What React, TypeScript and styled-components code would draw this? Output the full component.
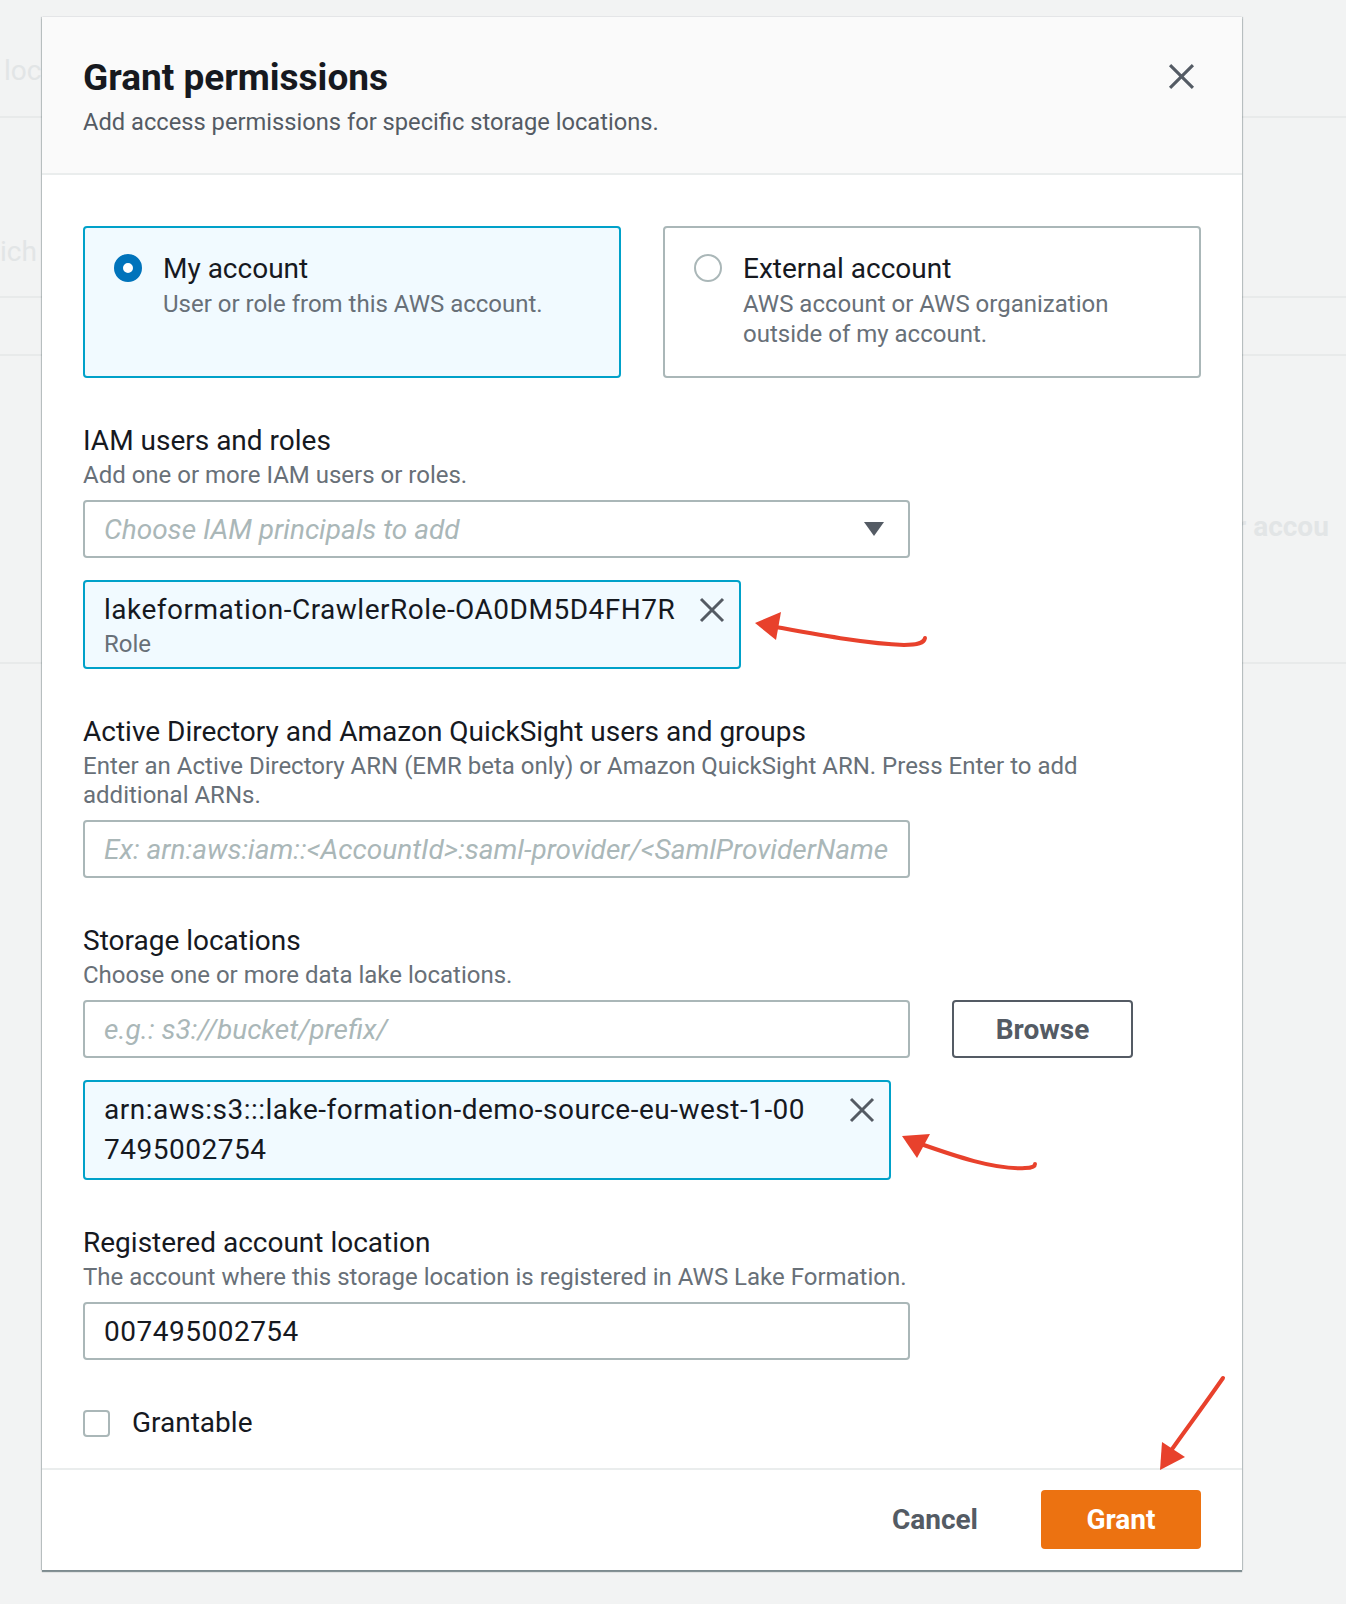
import React from "react";
import styled, { createGlobalStyle } from "styled-components";

const Global = createGlobalStyle`
  html, body { margin: 0; padding: 0; background: #f2f3f3; }
  body {
    font-family: Roboto, "Liberation Sans", Arial, sans-serif;
    -webkit-font-smoothing: antialiased;
  }
  * { box-sizing: border-box; }
`;

const Page = styled.div`
  position: relative;
  width: 1346px;
  height: 1604px;
  overflow: hidden;
  background: #f2f3f3;
`;

/* ---------- obscured page behind the dialog ---------- */
const Backdrop = styled.div`
  display: flex;
  flex-direction: column;
`;

const BgRow = styled.div<{ $h: number; $line?: boolean }>`
  height: ${(p) => p.$h}px;
  border-bottom: ${(p) => (p.$line ? "2px solid #e8eaea" : "none")};
`;

const BgText = styled.div<{ $top: number; $left: number; $bold?: boolean }>`
  width: max-content;
  margin-top: ${(p) => p.$top}px;
  margin-left: ${(p) => p.$left}px;
  font-size: 28px;
  line-height: 40px;
  font-weight: ${(p) => (p.$bold ? 700 : 400)};
  color: #e2e5e6;
  white-space: nowrap;
`;

/* ---------- dialog ---------- */
const Overlay = styled.div`
  position: absolute;
  inset: 0;
  padding: 17px 0 0 42px;
`;

const Modal = styled.div`
  width: 1200px;
  background: #ffffff;
  box-shadow: 0 2px 1px rgba(0, 28, 36, 0.45), 1px 0 1px rgba(0, 28, 36, 0.18),
    -1px 0 1px rgba(0, 28, 36, 0.18);
`;

const Header = styled.div`
  display: flex;
  justify-content: space-between;
  align-items: flex-start;
  background: #fafafa;
  border-bottom: 2px solid #eaeded;
  padding: 39px 41px 36px;
`;

const Title = styled.h2`
  margin: 0;
  font-size: 37px;
  line-height: 44px;
  font-weight: 700;
  color: #16191f;
`;

const Subtitle = styled.p`
  margin: 8px 0 0;
  font-size: 23.7px;
  line-height: 29px;
  color: #545b64;
`;

const IconButton = styled.button`
  width: 40px;
  height: 40px;
  border: 0;
  padding: 0;
  background: transparent;
  display: flex;
  align-items: center;
  justify-content: center;
  color: #545b64;
  cursor: pointer;
`;

const Body = styled.div`
  display: flex;
  flex-direction: column;
  gap: 43px;
  padding: 51px 41px 25px;
`;

const Tiles = styled.div`
  display: grid;
  grid-template-columns: 1fr 1fr;
  gap: 42px;
`;

const Tile = styled.div<{ $selected?: boolean }>`
  height: 152px;
  display: flex;
  align-items: flex-start;
  gap: 21px;
  padding: 21px 20px 0 29px;
  border: 2px solid ${(p) => (p.$selected ? "#00a1c9" : "#aab7b8")};
  border-radius: 4px;
  background: ${(p) => (p.$selected ? "#f1faff" : "#ffffff")};
`;

const Radio = styled.span<{ $checked?: boolean }>`
  flex: none;
  width: 28px;
  height: 28px;
  margin-top: 5px;
  border-radius: 50%;
  background: #ffffff;
  border: ${(p) => (p.$checked ? "9px solid #0073bb" : "2px solid #aab7b8")};
`;

const TileText = styled.div`
  display: flex;
  flex-direction: column;
`;

const TileTitle = styled.div`
  font-size: 28px;
  line-height: 40px;
  color: #16191f;
`;

const TileDesc = styled.div`
  font-size: 24px;
  line-height: 30px;
  color: #687078;
`;

const Field = styled.div`
  display: flex;
  flex-direction: column;
  align-items: flex-start;
`;

const Label = styled.div`
  font-size: 28px;
  line-height: 40px;
  color: #16191f;
`;

const Description = styled.div`
  font-size: 24px;
  line-height: 29px;
  color: #687078;
`;

const ControlRow = styled.div`
  display: flex;
  gap: 42px;
  margin-top: 10px;
`;

const TextInput = styled.input`
  width: 827px;
  height: 58px;
  margin: 0;
  padding: 0 19px;
  border: 2px solid #aab7b8;
  border-radius: 4px;
  background: #ffffff;
  font-family: inherit;
  font-size: 28px;
  letter-spacing: 0.5px;
  color: #16191f;
  outline: none;
  &::placeholder {
    color: #aab7b8;
    font-style: italic;
    letter-spacing: 0;
  }
`;

const Select = styled.div`
  width: 827px;
  height: 58px;
  display: flex;
  align-items: center;
  justify-content: space-between;
  padding: 0 24px 0 19px;
  border: 2px solid #aab7b8;
  border-radius: 4px;
  background: #ffffff;
`;

const Placeholder = styled.span`
  font-size: 28px;
  font-style: italic;
  color: #aab7b8;
`;

const Token = styled.div<{ $width: number }>`
  width: ${(p) => p.$width}px;
  margin-top: 22px;
  display: flex;
  justify-content: space-between;
  align-items: flex-start;
  padding: 8px 14px 8px 19px;
  border: 2px solid #00a1c9;
  border-radius: 4px;
  background: #f1faff;
`;

const TokenBody = styled.div`
  display: flex;
  flex-direction: column;
`;

const TokenText = styled.div`
  font-size: 28px;
  line-height: 40px;
  letter-spacing: 0.5px;
  color: #16191f;
`;

const TokenSub = styled.div`
  font-size: 24px;
  line-height: 29px;
  color: #687078;
`;

const Dismiss = styled(IconButton)`
  width: 26px;
  height: 26px;
  margin-top: 7px;
`;

const SecondaryButton = styled.button`
  width: 181px;
  height: 58px;
  border: 2px solid #545b64;
  border-radius: 4px;
  background: #ffffff;
  font-family: inherit;
  font-size: 28px;
  font-weight: 700;
  color: #545b64;
  cursor: pointer;
`;

const CheckRow = styled.label`
  display: flex;
  align-items: center;
  gap: 22px;
  font-size: 28px;
  line-height: 40px;
  color: #16191f;
`;

const Checkbox = styled.span`
  width: 27px;
  height: 27px;
  border: 2px solid #aab7b8;
  border-radius: 4px;
  background: #ffffff;
`;

const Footer = styled.div`
  display: flex;
  justify-content: flex-end;
  align-items: center;
  gap: 43px;
  border-top: 2px solid #eaeded;
  padding: 20px 41px 21px;
`;

const LinkButton = styled.button`
  height: 59px;
  padding: 0 20px;
  border: 0;
  background: transparent;
  font-family: inherit;
  font-size: 28px;
  font-weight: 700;
  color: #545b64;
  cursor: pointer;
`;

const PrimaryButton = styled.button`
  width: 160px;
  height: 59px;
  border: 0;
  border-radius: 4px;
  background: #ec7211;
  font-family: inherit;
  font-size: 28px;
  font-weight: 700;
  color: #ffffff;
  cursor: pointer;
`;

const Annotations = styled.svg`
  position: absolute;
  left: 0;
  top: 0;
  pointer-events: none;
`;

const CloseIcon = ({ size }: { size: number }) => (
  <svg width={size} height={size} viewBox="0 0 26 26" fill="none">
    <path d="M2 2 L24 24 M24 2 L2 24" stroke="currentColor" strokeWidth="3" />
  </svg>
);

const Caret = () => (
  <svg width="20" height="14" viewBox="0 0 20 14">
    <path d="M0 0 H20 L10 14 Z" fill="#545b64" />
  </svg>
);

export default function App() {
  return (
    <Page>
      <Global />
      <Backdrop>
        <BgRow $h={118} $line>
          <BgText $top={51} $left={4}>
            loc
          </BgText>
        </BgRow>
        <BgRow $h={180} $line>
          <BgText $top={114} $left={0}>
            ich
          </BgText>
        </BgRow>
        <BgRow $h={58} $line />
        <BgRow $h={308} $line>
          <BgText $top={151} $left={1236} $bold>
            r accou
          </BgText>
        </BgRow>
      </Backdrop>

      <Overlay>
        <Modal role="dialog" aria-label="Grant permissions">
          <Header>
            <div>
              <Title>Grant permissions</Title>
              <Subtitle>Add access permissions for specific storage locations.</Subtitle>
            </div>
            <IconButton aria-label="Close">
              <CloseIcon size={27} />
            </IconButton>
          </Header>

          <Body>
            <Tiles>
              <Tile $selected>
                <Radio $checked />
                <TileText>
                  <TileTitle>My account</TileTitle>
                  <TileDesc>User or role from this AWS account.</TileDesc>
                </TileText>
              </Tile>
              <Tile>
                <Radio />
                <TileText>
                  <TileTitle>External account</TileTitle>
                  <TileDesc>
                    AWS account or AWS organization
                    <br />
                    outside of my account.
                  </TileDesc>
                </TileText>
              </Tile>
            </Tiles>

            <Field>
              <Label>IAM users and roles</Label>
              <Description>Add one or more IAM users or roles.</Description>
              <ControlRow>
                <Select>
                  <Placeholder>Choose IAM principals to add</Placeholder>
                  <Caret />
                </Select>
              </ControlRow>
              <Token $width={658}>
                <TokenBody>
                  <TokenText>lakeformation-CrawlerRole-OA0DM5D4FH7R</TokenText>
                  <TokenSub>Role</TokenSub>
                </TokenBody>
                <Dismiss aria-label="Remove">
                  <CloseIcon size={26} />
                </Dismiss>
              </Token>
            </Field>

            <Field>
              <Label>Active Directory and Amazon QuickSight users and groups</Label>
              <Description>
                Enter an Active Directory ARN (EMR beta only) or Amazon QuickSight ARN. Press Enter to add
                <br />
                additional ARNs.
              </Description>
              <ControlRow>
                <TextInput
                  readOnly
                  placeholder="Ex: arn:aws:iam::<AccountId>:saml-provider/<SamlProviderName>:group/<GroupName>"
                />
              </ControlRow>
            </Field>

            <Field>
              <Label>Storage locations</Label>
              <Description>Choose one or more data lake locations.</Description>
              <ControlRow>
                <TextInput readOnly placeholder="e.g.: s3://bucket/prefix/" />
                <SecondaryButton>Browse</SecondaryButton>
              </ControlRow>
              <Token $width={808}>
                <TokenBody>
                  <TokenText>
                    arn:aws:s3:::lake-formation-demo-source-eu-west-1-00
                    <br />
                    7495002754
                  </TokenText>
                </TokenBody>
                <Dismiss aria-label="Remove">
                  <CloseIcon size={26} />
                </Dismiss>
              </Token>
            </Field>

            <Field>
              <Label>Registered account location</Label>
              <Description>The account where this storage location is registered in AWS Lake Formation.</Description>
              <ControlRow>
                <TextInput readOnly defaultValue="007495002754" />
              </ControlRow>
            </Field>

            <CheckRow>
              <Checkbox />
              Grantable
            </CheckRow>
          </Body>

          <Footer>
            <LinkButton>Cancel</LinkButton>
            <PrimaryButton>Grant</PrimaryButton>
          </Footer>
        </Modal>
      </Overlay>

      <Annotations width="1346" height="1604" viewBox="0 0 1346 1604">
        <g stroke="#e8412c" strokeWidth="4" fill="none" strokeLinecap="round">
          <path d="M776 627 C 820 635, 868 644, 904 645 C 918 645, 924 643, 925 638" />
          <path d="M918 1143 C 955 1156, 995 1170, 1025 1168 C 1032 1168, 1035 1166, 1035 1164" />
          <path d="M1223 1378 C 1205 1404, 1187 1428, 1170 1452" />
        </g>
        <g fill="#e8412c">
          <polygon points="755,623 781,612 776,640" />
          <polygon points="902,1136 930,1134 917,1158" />
          <polygon points="1160,1470 1162,1442 1185,1457" />
        </g>
      </Annotations>
    </Page>
  );
}
